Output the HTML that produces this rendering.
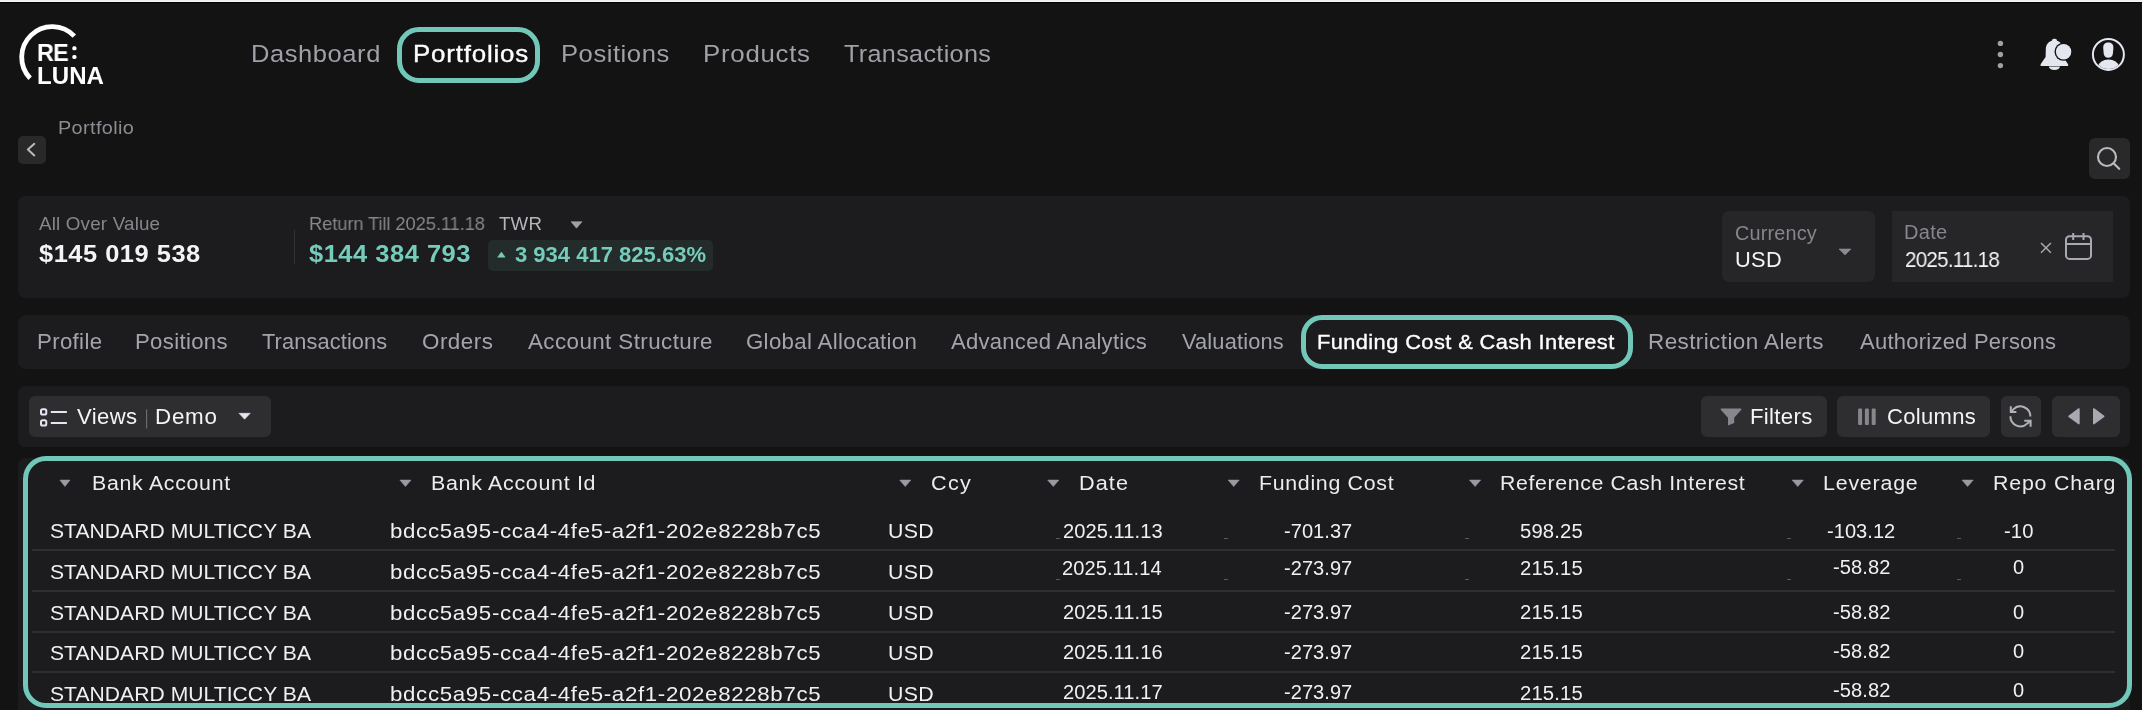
<!DOCTYPE html>
<html><head><meta charset="utf-8"><style>
html,body{margin:0;padding:0;width:2142px;height:710px;overflow:hidden;background:#131313;position:relative}
.t{position:absolute;white-space:pre;will-change:transform}
.r{position:absolute}
</style></head><body>
<!-- top strip -->
<div class="r" style="left:0;top:0;width:2142px;height:1px;background:#ededeb"></div>
<div class="r" style="left:0;top:1px;width:2142px;height:1px;background:#f8f8f6"></div>
<div class="r" style="left:0;top:2px;width:2142px;height:1px;background:#000"></div>
<!-- header svg icons -->
<svg class="r" style="left:0;top:0" width="2142" height="200" viewBox="0 0 2142 200">
  <path d="M74.29,36.17 A30.5,30.5 0 1,0 30.13,78.26" fill="none" stroke="#fff" stroke-width="4.8"/>
  <rect x="72.3" y="46.3" width="4.2" height="4" rx="1.6" fill="#fff"/>
  <rect x="72.3" y="54.9" width="4.2" height="4" rx="1.6" fill="#fff"/>
  <!-- dots -->
  <circle cx="2000.4" cy="43.4" r="2.7" fill="#a0a0a8"/>
  <circle cx="2000.4" cy="54.5" r="2.7" fill="#a0a0a8"/>
  <circle cx="2000.4" cy="65.6" r="2.7" fill="#a0a0a8"/>
  <!-- bell -->
  <rect x="2051.9" y="38.8" width="5.1" height="4.6" rx="2" fill="#e4e6f0"/>
  <path d="M2054.4,40.2 C2049.5,40.6 2045.9,43.8 2045.8,49 L2045.6,57 L2040.6,64.3 L2040.6,65.9 L2068.1,65.9 L2068.1,64.3 L2063.2,57 L2063,49 C2062.9,43.8 2059.3,40.6 2054.4,40.2 Z" fill="#e4e6f0"/>
  <path d="M2048.8,66.6 A5.6,3.4 0 0,0 2060,66.6 Z" fill="#e4e6f0"/>
  <circle cx="2063.6" cy="51.7" r="9.1" fill="#131313"/>
  <circle cx="2063.6" cy="51.7" r="7.7" fill="#e4e6f0"/>
  <!-- user -->
  <circle cx="2108.4" cy="54.4" r="15.5" fill="none" stroke="#e4e6f0" stroke-width="2"/>
  <clipPath id="uc"><circle cx="2108.4" cy="54.4" r="14.5"/></clipPath>
  <path d="M2103.2,48 C2103.2,43.8 2105.2,42.5 2108.3,42.5 C2111.4,42.5 2113.4,43.8 2113.4,48 L2112.9,53.5 C2112.5,56.6 2110.8,57.7 2108.3,57.7 C2105.8,57.7 2104.1,56.6 2103.7,53.5 Z" fill="#e4e6f0"/>
  <ellipse cx="2108.5" cy="66.2" rx="10" ry="6.6" fill="#e4e6f0" clip-path="url(#uc)"/>
  <!-- back btn -->
  <rect x="18" y="136" width="28" height="28" rx="5" fill="#29292a"/>
  <path d="M34.3,143.8 L27.9,149.6 L34.3,155.4" fill="none" stroke="#b8bac2" stroke-width="2" stroke-linecap="round" stroke-linejoin="round"/>
  <!-- search btn -->
  <rect x="2089" y="138" width="41" height="41" rx="6" fill="#29292a"/>
  <circle cx="2107" cy="157" r="9" fill="none" stroke="#b8bac2" stroke-width="2.1"/>
  <path d="M2113.6,163.2 L2119.2,168.8" stroke="#b8bac2" stroke-width="2.2" stroke-linecap="round"/>
</svg>
<!-- Portfolios nav box -->
<div class="r" style="left:397px;top:27px;width:133px;height:46px;border:5px solid #72c8b8;border-radius:22px"></div>
<!-- summary card -->
<div class="r" style="left:18px;top:196px;width:2112px;height:101.5px;background:#1c1c1e;border-radius:7px"></div>
<div class="r" style="left:294px;top:230px;width:1px;height:34px;background:#333336"></div>
<div class="r" style="left:488px;top:240px;width:225px;height:31px;background:#232b2b;border-radius:5px"></div>
<div class="r" style="left:1722px;top:211px;width:153px;height:71px;background:#262628;border-radius:7px"></div>
<div class="r" style="left:1892px;top:211px;width:221px;height:71px;background:#262628"></div>
<svg class="r" style="left:0;top:190px" width="2142" height="110" viewBox="0 190 2142 110">
  <path d="M571,221.7 L582,221.7 L576.5,228.2 Z" fill="#a0a0a8" stroke="#a0a0a8" stroke-width="0.6" stroke-linejoin="round"/>
  <path d="M497.6,257.2 L505.2,257.2 L501.4,252 Z" fill="#76ccbb" stroke="#76ccbb" stroke-width="0.5" stroke-linejoin="round"/>
  <path d="M1839,249 L1851,249 L1845,255 Z" fill="#8a8a90" stroke="#8a8a90" stroke-width="0.6" stroke-linejoin="round"/>
  <path d="M2041,243 L2050.9,252.8 M2050.9,243 L2041,252.8" stroke="#a8aab2" stroke-width="1.5"/>
  <rect x="2066" y="236.2" width="25" height="22.7" rx="3.5" fill="none" stroke="#a8aab2" stroke-width="2"/>
  <path d="M2066,244.1 L2091,244.1 M2073.2,233 L2073.2,240 M2083.5,233 L2083.5,240" stroke="#a8aab2" stroke-width="2"/>
</svg>
<!-- tabs bar -->
<div class="r" style="left:18px;top:315px;width:2112px;height:54px;background:#1c1c1e;border-radius:8px"></div>
<div class="r" style="left:1301px;top:315px;width:322px;height:44px;border:5px solid #72c8b8;border-radius:21px"></div>
<!-- toolbar -->
<div class="r" style="left:18px;top:386px;width:2112px;height:61px;background:#1c1c1e;border-radius:7px"></div>
<div class="r" style="left:29px;top:396px;width:242px;height:41px;background:#2e2e30;border-radius:6px"></div>
<div class="r" style="left:1701px;top:396px;width:126px;height:41px;background:#2e2e30;border-radius:6px"></div>
<div class="r" style="left:1837px;top:396px;width:153px;height:41px;background:#2e2e30;border-radius:6px"></div>
<div class="r" style="left:2001px;top:396px;width:40px;height:41px;background:#2e2e30;border-radius:6px"></div>
<div class="r" style="left:2052px;top:396px;width:68px;height:41px;background:#2e2e30;border-radius:6px"></div>
<svg class="r" style="left:0;top:380px" width="2142" height="70" viewBox="0 380 2142 70">
  <rect x="41" y="409.2" width="5.3" height="5.4" rx="1.6" fill="none" stroke="#e4e6f0" stroke-width="2"/>
  <rect x="41" y="420.3" width="5.3" height="5.2" rx="1.6" fill="none" stroke="#e4e6f0" stroke-width="2"/>
  <path d="M50.8,412 L66.9,412 M50.8,423 L66.9,423" stroke="#e4e6f0" stroke-width="2"/>
  <rect x="146" y="409.4" width="1.2" height="19" fill="#6a6a70"/>
  <path d="M239,413.3 L250.2,413.3 L244.6,419.2 Z" fill="#e4e6f0" stroke="#e4e6f0" stroke-width="0.6" stroke-linejoin="round"/>
  <path d="M1721.3,408.4 L1740.8,408.4 Q1742,408.6 1741.3,409.8 L1734.2,417.8 L1734.2,423 L1728,425.6 L1728,417.8 L1720.8,409.8 Q1720.1,408.6 1721.3,408.4 Z" fill="#86868c"/>
  <rect x="1858.1" y="408.6" width="4" height="16.5" rx="1" fill="#86868c"/>
  <rect x="1864.9" y="408.6" width="4" height="16.5" rx="1" fill="#86868c"/>
  <rect x="1871.7" y="408.6" width="4" height="16.5" rx="1" fill="#86868c"/>
  <g fill="none" stroke="#b0b2ba" stroke-width="2" stroke-linejoin="miter">
  <path d="M2030.4,416.6 A10,10 0 0,0 2013.3,409.4 L2011.4,411.4"/>
  <path d="M2010.8,406.2 L2010.8,411.9 L2016.4,411.9"/>
  <path d="M2010.4,416.3 A10,10 0 0,0 2027.5,423.4 L2029.9,421.3"/>
  <path d="M2024.3,420.7 L2030.6,420.7 L2030.6,426.7"/>
  </g>
  <path d="M2069,416.3 L2078.9,409 L2078.9,423.6 Z" fill="#a8aab2" stroke="#a8aab2" stroke-width="1.6" stroke-linejoin="round"/>
  <path d="M2103.7,416.3 L2093.8,409 L2093.8,423.6 Z" fill="#a8aab2" stroke="#a8aab2" stroke-width="1.6" stroke-linejoin="round"/>
</svg>
<!-- table -->
<div class="r" style="left:18px;top:458px;width:2112px;height:260px;background:#1c1c1e;border-radius:7px"></div>
<div class="r" style="left:23px;top:456px;width:2099px;height:242px;border:5px solid #72c8b8;border-radius:23px;background:#1c1c1e"></div>
<div class="r" style="left:32px;top:549px;width:2083px;height:2px;background:#2f2f32"></div>
<div class="r" style="left:32px;top:590px;width:2083px;height:2px;background:#2f2f32"></div>
<div class="r" style="left:32px;top:630.5px;width:2083px;height:2px;background:#2f2f32"></div>
<div class="r" style="left:32px;top:671px;width:2083px;height:2px;background:#2f2f32"></div>
<svg class="r" style="left:0;top:470px" width="2142" height="30" viewBox="0 470 2142 30">
  <g fill="#9a9aa2" stroke="#9a9aa2" stroke-width="0.6" stroke-linejoin="round">
  <path d="M59.9,480.1 L70,480.1 L64.95,486.5 Z"/>
  <path d="M399.9,480.1 L411,480.1 L405.45,486.5 Z"/>
  <path d="M899.7,480.1 L910.8,480.1 L905.25,486.5 Z"/>
  <path d="M1047.7,480.1 L1058.9,480.1 L1053.3,486.5 Z"/>
  <path d="M1228.2,480.1 L1239.2,480.1 L1233.7,486.5 Z"/>
  <path d="M1469.5,480.1 L1480.7,480.1 L1475.1,486.5 Z"/>
  <path d="M1792.2,480.1 L1803.3,480.1 L1797.75,486.5 Z"/>
  <path d="M1962,480.1 L1973.2,480.1 L1967.6,486.5 Z"/>
  </g>
</svg>
<div class="r" style="left:1055.5px;top:538px;width:4px;height:1px;background:#5a5a5e"></div>
<div class="r" style="left:1223.5px;top:538px;width:4px;height:1px;background:#5a5a5e"></div>
<div class="r" style="left:1464.5px;top:538px;width:4px;height:1px;background:#5a5a5e"></div>
<div class="r" style="left:1787px;top:538px;width:4px;height:1px;background:#5a5a5e"></div>
<div class="r" style="left:1957px;top:538px;width:4px;height:1px;background:#5a5a5e"></div>
<div class="r" style="left:1055.5px;top:579px;width:4px;height:1px;background:#5a5a5e"></div>
<div class="r" style="left:1223.5px;top:579px;width:4px;height:1px;background:#5a5a5e"></div>
<div class="r" style="left:1464.5px;top:579px;width:4px;height:1px;background:#5a5a5e"></div>
<div class="r" style="left:1787px;top:579px;width:4px;height:1px;background:#5a5a5e"></div>
<div class="r" style="left:1957px;top:579px;width:4px;height:1px;background:#5a5a5e"></div>

<div class="t" style="left:250.82px;top:42.10px;font:400 24.5px/24.5px 'Liberation Sans';letter-spacing:0.559px;color:#9fa0a8;transform:scaleX(1.0401);transform-origin:0 0;">Dashboard</div>
<div class="t" style="left:412.95px;top:42.00px;font:400 24px/24px 'Liberation Sans';letter-spacing:0.769px;color:#ffffff;transform:scaleX(1.0768);transform-origin:0 0;-webkit-text-stroke:0.35px #fff;">Portfolios</div>
<div class="t" style="left:560.91px;top:42.30px;font:400 24.5px/24.5px 'Liberation Sans';letter-spacing:0.520px;color:#9fa0a8;transform:scaleX(1.0448);transform-origin:0 0;">Positions</div>
<div class="t" style="left:702.69px;top:42.30px;font:400 24.5px/24.5px 'Liberation Sans';letter-spacing:0.691px;color:#9fa0a8;transform:scaleX(1.0543);transform-origin:0 0;">Products</div>
<div class="t" style="left:844.00px;top:42.30px;font:400 24.5px/24.5px 'Liberation Sans';letter-spacing:0.332px;color:#9fa0a8;transform:scaleX(1.0270);transform-origin:0 0;">Transactions</div>
<div class="t" style="left:36.65px;top:40.70px;font:700 24px/24px 'Liberation Sans';letter-spacing:-0.769px;color:#ffffff;transform:scaleX(0.9758);transform-origin:0 0;">RE</div>
<div class="t" style="left:36.60px;top:63.80px;font:700 24px/24px 'Liberation Sans';letter-spacing:0.050px;color:#ffffff;transform:scaleX(1.0023);transform-origin:0 0;">LUNA</div>
<div class="t" style="left:58.21px;top:118.10px;font:400 19px/19px 'Liberation Sans';letter-spacing:0.359px;color:#8c8c92;transform:scaleX(1.0448);transform-origin:0 0;">Portfolio</div>
<div class="t" style="left:39.10px;top:215.40px;font:400 18.5px/18.5px 'Liberation Sans';letter-spacing:0.159px;color:#86868c;transform:scaleX(1.0181);transform-origin:0 0;">All Over Value</div>
<div class="t" style="left:39.20px;top:242.10px;font:700 24.5px/24.5px 'Liberation Sans';letter-spacing:0.495px;color:#f4f4f6;transform:scaleX(1.0379);transform-origin:0 0;">$145 019 538</div>
<div class="t" style="left:308.51px;top:214.80px;font:400 18.5px/18.5px 'Liberation Sans';letter-spacing:-0.089px;color:#86868c;transform:scaleX(0.9896);transform-origin:0 0;">Return Till 2025.11.18</div>
<div class="t" style="left:499.20px;top:214.80px;font:400 18.5px/18.5px 'Liberation Sans';letter-spacing:0.198px;color:#b4b6bc;transform:scaleX(1.0098);transform-origin:0 0;">TWR</div>
<div class="t" style="left:309.20px;top:242.10px;font:700 24.5px/24.5px 'Liberation Sans';letter-spacing:0.503px;color:#76ccbb;transform:scaleX(1.0386);transform-origin:0 0;">$144 384 793</div>
<div class="t" style="left:514.50px;top:244.20px;font:700 22px/22px 'Liberation Sans';letter-spacing:0.006px;color:#76ccbb;transform:scaleX(1.0005);transform-origin:0 0;">3 934 417 825.63%</div>
<div class="t" style="left:1734.78px;top:224.20px;font:400 19.5px/19.5px 'Liberation Sans';letter-spacing:0.183px;color:#86868c;transform:scaleX(1.0167);transform-origin:0 0;">Currency</div>
<div class="t" style="left:1735.37px;top:249.90px;font:400 21.5px/21.5px 'Liberation Sans';letter-spacing:0.296px;color:#f4f4f6;transform:scaleX(1.0143);transform-origin:0 0;">USD</div>
<div class="t" style="left:1903.95px;top:223.20px;font:400 19.5px/19.5px 'Liberation Sans';letter-spacing:0.309px;color:#86868c;transform:scaleX(1.0250);transform-origin:0 0;">Date</div>
<div class="t" style="left:1905.06px;top:249.30px;font:400 22px/22px 'Liberation Sans';letter-spacing:-0.807px;color:#f4f4f6;transform:scaleX(0.9364);transform-origin:0 0;">2025.11.18</div>
<div class="t" style="left:36.53px;top:332.00px;font:400 21.5px/21.5px 'Liberation Sans';letter-spacing:0.322px;color:#a4a5ac;transform:scaleX(1.0345);transform-origin:0 0;">Profile</div>
<div class="t" style="left:134.64px;top:332.00px;font:400 21.5px/21.5px 'Liberation Sans';letter-spacing:0.315px;color:#a4a5ac;transform:scaleX(1.0306);transform-origin:0 0;">Positions</div>
<div class="t" style="left:262.40px;top:332.00px;font:400 21.5px/21.5px 'Liberation Sans';letter-spacing:0.130px;color:#a4a5ac;transform:scaleX(1.0119);transform-origin:0 0;">Transactions</div>
<div class="t" style="left:422.36px;top:332.00px;font:400 21.5px/21.5px 'Liberation Sans';letter-spacing:0.490px;color:#a4a5ac;transform:scaleX(1.0398);transform-origin:0 0;">Orders</div>
<div class="t" style="left:528.20px;top:332.00px;font:400 21.5px/21.5px 'Liberation Sans';letter-spacing:0.406px;color:#a4a5ac;transform:scaleX(1.0397);transform-origin:0 0;">Account Structure</div>
<div class="t" style="left:745.87px;top:332.00px;font:400 21.5px/21.5px 'Liberation Sans';letter-spacing:0.323px;color:#a4a5ac;transform:scaleX(1.0339);transform-origin:0 0;">Global Allocation</div>
<div class="t" style="left:950.80px;top:332.00px;font:400 21.5px/21.5px 'Liberation Sans';letter-spacing:0.267px;color:#a4a5ac;transform:scaleX(1.0250);transform-origin:0 0;">Advanced Analytics</div>
<div class="t" style="left:1182.10px;top:332.00px;font:400 21.5px/21.5px 'Liberation Sans';letter-spacing:0.153px;color:#a4a5ac;transform:scaleX(1.0143);transform-origin:0 0;">Valuations</div>
<div class="t" style="left:1316.92px;top:331.00px;font:400 21px/21px 'Liberation Sans';letter-spacing:0.387px;color:#ffffff;transform:scaleX(1.0396);transform-origin:0 0;-webkit-text-stroke:0.35px #fff;">Funding Cost &amp; Cash Interest</div>
<div class="t" style="left:1648.41px;top:332.00px;font:400 21.5px/21.5px 'Liberation Sans';letter-spacing:0.397px;color:#a4a5ac;transform:scaleX(1.0443);transform-origin:0 0;">Restriction Alerts</div>
<div class="t" style="left:1859.50px;top:332.00px;font:400 21.5px/21.5px 'Liberation Sans';letter-spacing:0.242px;color:#a4a5ac;transform:scaleX(1.0225);transform-origin:0 0;">Authorized Persons</div>
<div class="t" style="left:76.70px;top:407.20px;font:400 21.5px/21.5px 'Liberation Sans';letter-spacing:0.377px;color:#f4f4f6;transform:scaleX(1.0277);transform-origin:0 0;">Views</div>
<div class="t" style="left:154.92px;top:407.20px;font:400 21.5px/21.5px 'Liberation Sans';letter-spacing:0.721px;color:#f4f4f6;transform:scaleX(1.0409);transform-origin:0 0;">Demo</div>
<div class="t" style="left:1750.13px;top:407.00px;font:400 21.5px/21.5px 'Liberation Sans';letter-spacing:0.298px;color:#f4f4f6;transform:scaleX(1.0330);transform-origin:0 0;">Filters</div>
<div class="t" style="left:1887.28px;top:407.00px;font:400 21.5px/21.5px 'Liberation Sans';letter-spacing:0.318px;color:#f4f4f6;transform:scaleX(1.0235);transform-origin:0 0;">Columns</div>
<div class="t" style="left:91.57px;top:473.00px;font:400 20px/20px 'Liberation Sans';letter-spacing:0.670px;color:#ececf0;transform:scaleX(1.0654);transform-origin:0 0;">Bank Account</div>
<div class="t" style="left:431.36px;top:473.00px;font:400 20px/20px 'Liberation Sans';letter-spacing:0.658px;color:#ececf0;transform:scaleX(1.0699);transform-origin:0 0;">Bank Account Id</div>
<div class="t" style="left:931.12px;top:473.00px;font:400 20px/20px 'Liberation Sans';letter-spacing:1.205px;color:#ececf0;transform:scaleX(1.0788);transform-origin:0 0;">Ccy</div>
<div class="t" style="left:1079.23px;top:473.00px;font:400 20px/20px 'Liberation Sans';letter-spacing:1.000px;color:#ececf0;transform:scaleX(1.0833);transform-origin:0 0;">Date</div>
<div class="t" style="left:1259.47px;top:473.00px;font:400 20px/20px 'Liberation Sans';letter-spacing:0.661px;color:#ececf0;transform:scaleX(1.0662);transform-origin:0 0;">Funding Cost</div>
<div class="t" style="left:1500.07px;top:473.00px;font:400 20px/20px 'Liberation Sans';letter-spacing:0.595px;color:#ececf0;transform:scaleX(1.0649);transform-origin:0 0;">Reference Cash Interest</div>
<div class="t" style="left:1823.36px;top:473.00px;font:400 20px/20px 'Liberation Sans';letter-spacing:0.748px;color:#ececf0;transform:scaleX(1.0691);transform-origin:0 0;">Leverage</div>
<div class="t" style="left:1993.16px;top:473.00px;font:400 20px/20px 'Liberation Sans';letter-spacing:0.749px;color:#ececf0;transform:scaleX(1.0686);transform-origin:0 0;">Repo Charg</div>
<div class="t" style="left:49.80px;top:520.20px;font:400 21px/21px 'Liberation Sans';letter-spacing:0.050px;color:#f0f0f2;transform:scaleX(1.0037);transform-origin:0 0;">STANDARD MULTICCY BA</div>
<div class="t" style="left:389.74px;top:520.20px;font:400 21px/21px 'Liberation Sans';letter-spacing:0.625px;color:#f0f0f2;transform:scaleX(1.0607);transform-origin:0 0;">bdcc5a95-cca4-4fe5-a2f1-202e8228b7c5</div>
<div class="t" style="left:888.37px;top:520.20px;font:400 21px/21px 'Liberation Sans';letter-spacing:0.344px;color:#f0f0f2;transform:scaleX(1.0167);transform-origin:0 0;">USD</div>
<div class="t" style="left:1063.39px;top:520.90px;font:400 20px/20px 'Liberation Sans';letter-spacing:0.055px;color:#f0f0f2;transform:scaleX(1.0052);transform-origin:0 0;">2025.11.13</div>
<div class="t" style="left:1283.50px;top:520.90px;font:400 20px/20px 'Liberation Sans';letter-spacing:0.033px;color:#f0f0f2;transform:scaleX(1.0030);transform-origin:0 0;">-701.37</div>
<div class="t" style="left:1520.49px;top:520.90px;font:400 20px/20px 'Liberation Sans';letter-spacing:0.158px;color:#f0f0f2;transform:scaleX(1.0136);transform-origin:0 0;">598.25</div>
<div class="t" style="left:1826.90px;top:521.20px;font:400 20px/20px 'Liberation Sans';letter-spacing:0.033px;color:#f0f0f2;transform:scaleX(1.0030);transform-origin:0 0;">-103.12</div>
<div class="t" style="left:2004.39px;top:521.20px;font:400 20px/20px 'Liberation Sans';letter-spacing:0.124px;color:#f0f0f2;transform:scaleX(1.0093);transform-origin:0 0;">-10</div>
<div class="t" style="left:49.80px;top:561.20px;font:400 21px/21px 'Liberation Sans';letter-spacing:0.050px;color:#f0f0f2;transform:scaleX(1.0037);transform-origin:0 0;">STANDARD MULTICCY BA</div>
<div class="t" style="left:389.74px;top:561.20px;font:400 21px/21px 'Liberation Sans';letter-spacing:0.625px;color:#f0f0f2;transform:scaleX(1.0607);transform-origin:0 0;">bdcc5a95-cca4-4fe5-a2f1-202e8228b7c5</div>
<div class="t" style="left:888.37px;top:561.20px;font:400 21px/21px 'Liberation Sans';letter-spacing:0.344px;color:#f0f0f2;transform:scaleX(1.0167);transform-origin:0 0;">USD</div>
<div class="t" style="left:1062.29px;top:558.00px;font:400 20px/20px 'Liberation Sans';letter-spacing:0.055px;color:#f0f0f2;transform:scaleX(1.0052);transform-origin:0 0;">2025.11.14</div>
<div class="t" style="left:1283.50px;top:558.00px;font:400 20px/20px 'Liberation Sans';letter-spacing:0.033px;color:#f0f0f2;transform:scaleX(1.0030);transform-origin:0 0;">-273.97</div>
<div class="t" style="left:1520.49px;top:558.00px;font:400 20px/20px 'Liberation Sans';letter-spacing:0.158px;color:#f0f0f2;transform:scaleX(1.0136);transform-origin:0 0;">215.15</div>
<div class="t" style="left:1832.59px;top:557.30px;font:400 20px/20px 'Liberation Sans';letter-spacing:0.079px;color:#f0f0f2;transform:scaleX(1.0073);transform-origin:0 0;">-58.82</div>
<div class="t" style="left:2012.50px;top:557.30px;font:400 20px/20px 'Liberation Sans';letter-spacing:0.000px;color:#f0f0f2;">0</div>
<div class="t" style="left:49.80px;top:601.60px;font:400 21px/21px 'Liberation Sans';letter-spacing:0.050px;color:#f0f0f2;transform:scaleX(1.0037);transform-origin:0 0;">STANDARD MULTICCY BA</div>
<div class="t" style="left:389.74px;top:601.60px;font:400 21px/21px 'Liberation Sans';letter-spacing:0.625px;color:#f0f0f2;transform:scaleX(1.0607);transform-origin:0 0;">bdcc5a95-cca4-4fe5-a2f1-202e8228b7c5</div>
<div class="t" style="left:888.37px;top:601.60px;font:400 21px/21px 'Liberation Sans';letter-spacing:0.344px;color:#f0f0f2;transform:scaleX(1.0167);transform-origin:0 0;">USD</div>
<div class="t" style="left:1063.39px;top:602.00px;font:400 20px/20px 'Liberation Sans';letter-spacing:0.055px;color:#f0f0f2;transform:scaleX(1.0052);transform-origin:0 0;">2025.11.15</div>
<div class="t" style="left:1283.50px;top:602.00px;font:400 20px/20px 'Liberation Sans';letter-spacing:0.033px;color:#f0f0f2;transform:scaleX(1.0030);transform-origin:0 0;">-273.97</div>
<div class="t" style="left:1520.49px;top:602.00px;font:400 20px/20px 'Liberation Sans';letter-spacing:0.158px;color:#f0f0f2;transform:scaleX(1.0136);transform-origin:0 0;">215.15</div>
<div class="t" style="left:1832.59px;top:602.10px;font:400 20px/20px 'Liberation Sans';letter-spacing:0.079px;color:#f0f0f2;transform:scaleX(1.0073);transform-origin:0 0;">-58.82</div>
<div class="t" style="left:2012.50px;top:602.10px;font:400 20px/20px 'Liberation Sans';letter-spacing:0.000px;color:#f0f0f2;">0</div>
<div class="t" style="left:49.80px;top:642.40px;font:400 21px/21px 'Liberation Sans';letter-spacing:0.050px;color:#f0f0f2;transform:scaleX(1.0037);transform-origin:0 0;">STANDARD MULTICCY BA</div>
<div class="t" style="left:389.74px;top:642.40px;font:400 21px/21px 'Liberation Sans';letter-spacing:0.625px;color:#f0f0f2;transform:scaleX(1.0607);transform-origin:0 0;">bdcc5a95-cca4-4fe5-a2f1-202e8228b7c5</div>
<div class="t" style="left:888.37px;top:642.40px;font:400 21px/21px 'Liberation Sans';letter-spacing:0.344px;color:#f0f0f2;transform:scaleX(1.0167);transform-origin:0 0;">USD</div>
<div class="t" style="left:1063.39px;top:642.00px;font:400 20px/20px 'Liberation Sans';letter-spacing:0.055px;color:#f0f0f2;transform:scaleX(1.0052);transform-origin:0 0;">2025.11.16</div>
<div class="t" style="left:1283.50px;top:642.00px;font:400 20px/20px 'Liberation Sans';letter-spacing:0.033px;color:#f0f0f2;transform:scaleX(1.0030);transform-origin:0 0;">-273.97</div>
<div class="t" style="left:1520.49px;top:642.00px;font:400 20px/20px 'Liberation Sans';letter-spacing:0.158px;color:#f0f0f2;transform:scaleX(1.0136);transform-origin:0 0;">215.15</div>
<div class="t" style="left:1833.49px;top:641.00px;font:400 20px/20px 'Liberation Sans';letter-spacing:0.079px;color:#f0f0f2;transform:scaleX(1.0073);transform-origin:0 0;">-58.82</div>
<div class="t" style="left:2012.50px;top:641.00px;font:400 20px/20px 'Liberation Sans';letter-spacing:0.000px;color:#f0f0f2;">0</div>
<div class="t" style="left:49.80px;top:683.40px;font:400 21px/21px 'Liberation Sans';letter-spacing:0.050px;color:#f0f0f2;transform:scaleX(1.0037);transform-origin:0 0;">STANDARD MULTICCY BA</div>
<div class="t" style="left:389.74px;top:683.40px;font:400 21px/21px 'Liberation Sans';letter-spacing:0.625px;color:#f0f0f2;transform:scaleX(1.0607);transform-origin:0 0;">bdcc5a95-cca4-4fe5-a2f1-202e8228b7c5</div>
<div class="t" style="left:888.37px;top:683.40px;font:400 21px/21px 'Liberation Sans';letter-spacing:0.344px;color:#f0f0f2;transform:scaleX(1.0167);transform-origin:0 0;">USD</div>
<div class="t" style="left:1063.39px;top:681.90px;font:400 20px/20px 'Liberation Sans';letter-spacing:0.055px;color:#f0f0f2;transform:scaleX(1.0052);transform-origin:0 0;">2025.11.17</div>
<div class="t" style="left:1283.50px;top:682.00px;font:400 20px/20px 'Liberation Sans';letter-spacing:0.033px;color:#f0f0f2;transform:scaleX(1.0030);transform-origin:0 0;">-273.97</div>
<div class="t" style="left:1520.49px;top:682.50px;font:400 20px/20px 'Liberation Sans';letter-spacing:0.158px;color:#f0f0f2;transform:scaleX(1.0136);transform-origin:0 0;">215.15</div>
<div class="t" style="left:1833.49px;top:680.00px;font:400 20px/20px 'Liberation Sans';letter-spacing:0.079px;color:#f0f0f2;transform:scaleX(1.0073);transform-origin:0 0;">-58.82</div>
<div class="t" style="left:2012.50px;top:680.00px;font:400 20px/20px 'Liberation Sans';letter-spacing:0.000px;color:#f0f0f2;">0</div>
</body></html>
